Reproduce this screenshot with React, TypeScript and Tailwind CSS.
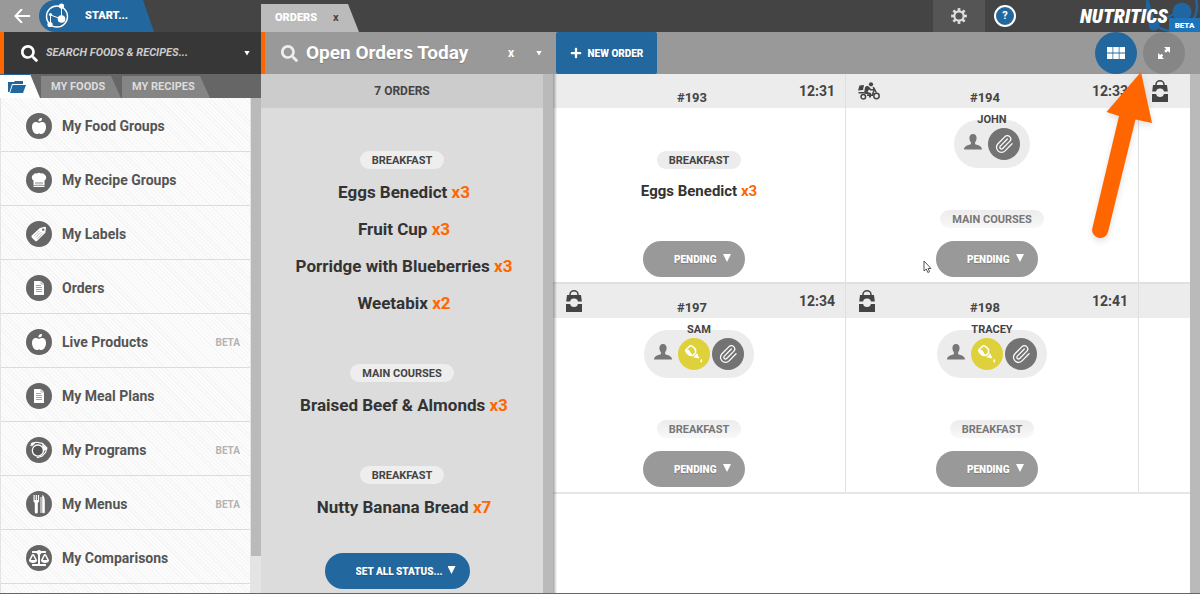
import React from 'react';
import { Paperclip } from 'lucide-react';
import { FaAppleAlt, FaBalanceScale, FaPlus, FaSearch } from 'react-icons/fa';

type IconProps = { className?: string };

interface Dish {
  name: string;
  qty: number;
}

interface Order {
  id: string;
  time: string;
  delivery?: 'bag' | 'bike';
  customer?: string;
  allergy?: boolean;
  course: string;
  dish?: Dish;
}

const ChefHatIcon: React.FC<IconProps> = ({ className }) => (
  <svg viewBox="0 0 16 16" className={className} fill="currentColor">
    <path d="M2.500 8.500A3.400 3.400 0 0 1 2.600 2.500 3.200 3.200 0 0 1 6 1.400a3.600 3.600 0 0 1 4 0A3.200 3.200 0 0 1 13.400 2.500 3.400 3.400 0 0 1 13.500 8.500V13h-11z" />
    <path d="M2.500 13.600h11V15h-11z" />
    <path d="M5 12.500V10M7 12.500V10M9 12.500V10M11 12.500V10" stroke="#666" strokeWidth=".8" />
  </svg>
);

const TagIcon: React.FC<IconProps> = ({ className }) => (
  <svg viewBox="0 0 20 20" className={className}>
    <path d="M11 3.200 16.500 2q1.300 0 1.300 1.300L17 8.500 7.800 17.700q-1 .8-2 0L2 13.800q-.8-1 0-2z" fill="currentColor" />
    <circle cx="14.700" cy="5.200" r="1.300" fill="#666" />
    <path d="m4.500 12.500 6-6M6.300 14l6-6M8 15.500l6-6" stroke="#999" strokeWidth=".8" />
  </svg>
);

const DocIcon: React.FC<IconProps> = ({ className }) => (
  <svg viewBox="0 0 16 16" className={className}>
    <path d="M3 1h7l3 3v11H3z" fill="currentColor" />
    <path d="M5 5.500h5M5 7.500h6M5 9.500h6M5 11.500h6" stroke="#999" strokeWidth=".9" />
    <path d="M10 1v3h3" fill="none" stroke="#999" strokeWidth=".7" />
  </svg>
);

const ProgramIcon: React.FC<IconProps> = ({ className }) => (
  <svg viewBox="0 0 18 18" className={className} fill="none" stroke="currentColor">
    <circle cx="8" cy="9.500" r="5" fill="#555" strokeWidth="1.200" />
    <path d="M1.500 5.500 3 3l4-1 5 1 4 4-1 4-3 3.500-5 1.500" strokeWidth="1" />
    <path d="m12 4 4.500 4-3.500 2z" fill="currentColor" strokeWidth=".5" />
    <path d="m2 3 4-1-3 3.500z" fill="currentColor" strokeWidth=".5" />
  </svg>
);

const CutleryIcon: React.FC<IconProps> = ({ className }) => (
  <svg viewBox="0 0 18 20" className={className} fill="currentColor">
    <path d="M3.500 1h1.200v5h1V1h1.200v5h1V1h1.200v6.500L7.800 9v9a1.500 1.500 0 0 1-3 0V9L3.500 7.500z" />
    <path d="M10.500 3h1v16h-1z" />
    <path d="M12.200 1c1.800.8 2.600 3 2.600 6v11a1.300 1.300 0 0 1-2.600 0z" />
  </svg>
);

const BagIcon: React.FC<IconProps> = ({ className }) => (
  <svg viewBox="0 0 18 22" className={className}>
    <path d="M5 6V4.500a4 3.700 0 0 1 8 0V6" fill="none" stroke="#444" strokeWidth="1.500" />
    <path d="M2 5h14l.8 6.500H1.200z" fill="#444" />
    <path d="M1 14h16v8H1z" fill="#444" />
    <ellipse cx="9" cy="12.800" rx="4" ry="4.200" fill="#ececec" />
  </svg>
);

const BikeIcon: React.FC<IconProps> = ({ className }) => (
  <svg viewBox="0 0 22 18" className={className} fill="#444">
    <circle cx="13" cy="2.300" r="2.100" />
    <path d="M1.500 3.500 6 3 5 8 0 8.500z" />
    <path d="M.5 10h6v1.500h-6z" />
    <path d="M7 5.500c1-1.500 3-1.800 4-.8l2 2.300h3v1.500h-3.600l-1.400-1L9.500 10l3.500 1v4.500h-2V12.500l-5-1z" />
    <path d="m14.500 4.500 2 1 2.500 5-1 .5-1.500-2-1.500 5H9v-1.500h4.500l2-4.500z" />
    <circle cx="5.300" cy="14.700" r="2.300" fill="none" stroke="#444" strokeWidth="1.500" />
    <circle cx="18.500" cy="14" r="2.700" fill="none" stroke="#444" strokeWidth="1.500" />
  </svg>
);

const PersonIcon: React.FC<IconProps> = ({ className }) => (
  <svg viewBox="0 0 18 16" className={className} fill="#777">
    <path d="M9 0c2.500 0 3.600 1.700 3.600 4 0 1.800-.8 3.300-1.500 4.200v2c2.400 1 6.900 1.500 6.900 5.300H0c0-3.800 4.500-4.300 6.900-5.300v-2C6.200 7.300 5.400 5.800 5.400 4 5.400 1.700 6.500 0 9 0z" />
  </svg>
);

const BottleIcon: React.FC<IconProps> = ({ className }) => (
  <svg viewBox="0 0 20 20" className={className} fill="none" stroke="#fff">
    <path d="M1.800 6 6.500 1.500c.8-.3 4 2.500 5 4v3.300L8.800 11.500l-3.300-.3C4 10 1.500 7.200 1.800 6z" strokeWidth="1.600" />
    <path d="M1.600 6c.6 2 2.500 4.200 4 5.500l3.200.2L5 6z" fill="#fff" stroke="none" />
    <path d="m9.300 13.200 3.900-4 2.300 5.300z" fill="#fff" stroke="none" />
    <path d="M17.300 14.800c1.300 1.700 1.300 3.600 0 3.600s-1.300-1.900 0-3.600z" fill="#fff" stroke="none" />
  </svg>
);

const GearIcon: React.FC<IconProps> = ({ className }) => (
  <svg viewBox="0 0 20 20" className={className} fill="none" stroke="#ddd">
    <circle cx="10" cy="10" r="5.200" strokeWidth="2.400" />
    {[0, 45, 90, 135, 180, 225, 270, 315].map((deg) => (
      <path key={deg} d="M10 1.200V4.500" strokeWidth="3" transform={`rotate(${deg} 10 10)`} />
    ))}
  </svg>
);

const menuItems = [
  { label: 'My Food Groups', icon: <FaAppleAlt className="h-4 w-4" /> },
  { label: 'My Recipe Groups', icon: <ChefHatIcon className="h-4 w-4" /> },
  { label: 'My Labels', icon: <TagIcon className="h-[18px] w-[18px]" /> },
  { label: 'Orders', icon: <DocIcon className="h-4 w-4" /> },
  { label: 'Live Products', icon: <FaAppleAlt className="h-4 w-4" />, beta: true },
  { label: 'My Meal Plans', icon: <DocIcon className="h-4 w-4" /> },
  { label: 'My Programs', icon: <ProgramIcon className="h-5 w-5" />, beta: true },
  { label: 'My Menus', icon: <CutleryIcon className="h-5 w-5" />, beta: true },
  { label: 'My Comparisons', icon: <FaBalanceScale className="h-4 w-5" /> },
];

const summary: { course: string; dishes: Dish[] }[] = [
  {
    course: 'BREAKFAST',
    dishes: [
      { name: 'Eggs Benedict', qty: 3 },
      { name: 'Fruit Cup', qty: 3 },
      { name: 'Porridge with Blueberries', qty: 3 },
      { name: 'Weetabix', qty: 2 },
    ],
  },
  { course: 'MAIN COURSES', dishes: [{ name: 'Braised Beef & Almonds', qty: 3 }] },
  { course: 'BREAKFAST', dishes: [{ name: 'Nutty Banana Bread', qty: 7 }] },
];

const orderRows: Order[][] = [
  [
    { id: '#193', time: '12:31', course: 'BREAKFAST', dish: { name: 'Eggs Benedict', qty: 3 } },
    { id: '#194', time: '12:33', delivery: 'bike', customer: 'JOHN', course: 'MAIN COURSES' },
  ],
  [
    { id: '#197', time: '12:34', delivery: 'bag', customer: 'SAM', allergy: true, course: 'BREAKFAST' },
    { id: '#198', time: '12:41', delivery: 'bag', customer: 'TRACEY', allergy: true, course: 'BREAKFAST' },
  ],
];

const StatusSelect: React.FC<{ label: string; value: string; wide?: boolean }> = ({ label, value, wide }) => (
  <div className={`relative mr-[10px] h-9 shrink-0 rounded-full text-white ${wide ? 'w-[145px] bg-[#22689f]' : 'w-[102px] bg-[#999]'}`}>
    <select
      aria-label={label}
      className="h-full w-full appearance-none rounded-full pl-[31px] text-[10px] font-black text-shadow-xs"
    >
      <option>{value}</option>
    </select>
    <span className="pointer-events-none absolute top-[13px] right-[14px] h-2 w-2 bg-white [clip-path:polygon(0_0,100%_0,50%_100%)]" />
  </div>
);

const OrderHeader: React.FC<{ order?: Order; icon?: React.ReactNode }> = ({ order, icon }) => (
  <div className="grid h-[34px] shrink-0 grid-cols-[60px_1fr_76px] bg-[#ececec] pr-[10px] pl-3">
    <div className="pt-[6px]">{icon}</div>
    <h3 className="pt-4 text-center text-[13px] leading-4">{order?.id}</h3>
    <time className="pt-2 text-right text-sm leading-[18px]">{order?.time}</time>
  </div>
);

const OrderCard: React.FC<{ order: Order }> = ({ order }) => (
  <article className="flex w-[293px] shrink-0 flex-col border-r border-[#e0e0e0]">
    <OrderHeader
      order={order}
      icon={
        order.delivery === 'bag' ? (
          <BagIcon className="h-[22px] w-[18px]" />
        ) : order.delivery === 'bike' ? (
          <BikeIcon className="mt-[2px] h-[18px] w-[22px]" />
        ) : null
      }
    />
    <div className={`flex h-[174px] flex-col items-center pb-[5px] ${order.customer ? 'pt-3' : 'pt-[43px]'}`}>
      {order.customer && (
        <div className="relative mb-[42px] flex h-12 shrink-0 items-center gap-[2px] rounded-full bg-[#ececec] px-[10px]">
          <span className="absolute inset-x-0 -top-2 text-center text-[11px] leading-4">{order.customer}</span>
          <PersonIcon className="mr-1 mb-1 h-4 w-[18px]" />
          {order.allergy && (
            <button aria-label="Allergies" className="flex h-8 w-8 items-center justify-center rounded-full bg-[#dfd13b]">
              <BottleIcon className="h-5 w-5" />
            </button>
          )}
          <button aria-label="Notes" className="flex h-8 w-8 items-center justify-center rounded-full bg-[#737373] text-white">
            <Paperclip className="h-5 w-5" strokeWidth={1.5} />
          </button>
        </div>
      )}
      <span
        className={`h-[18px] rounded-full px-3 text-[11px] leading-[19px] ${
          order.customer ? 'bg-linear-to-b from-[#ececec] to-[#f8f8f8] text-[#777]' : 'bg-[#ececec] text-[#444]'
        }`}
      >
        {order.course}
      </span>
      {order.dish && (
        <p className="pt-3 text-[15px] leading-5 text-[#333]">
          {order.dish.name} <span className="text-[#ff6600]">x{order.dish.qty}</span>
        </p>
      )}
      <div className="mt-auto">
        <StatusSelect label={`Status of order ${order.id}`} value="PENDING" />
      </div>
    </div>
  </article>
);

const Sidebar: React.FC = () => (
  <aside className="flex w-[261px] shrink-0 flex-col">
    <div className="flex h-8 shrink-0 bg-[#444]">
      <button aria-label="Back" className="flex w-[60px] shrink-0 items-center bg-[#999] pl-[14px]">
        <svg viewBox="0 0 16 14" className="h-[14px] w-4 shrink-0" fill="none" stroke="#fff" strokeWidth="2">
          <path d="M8 0 1.500 7 8 14M1.500 7H16" />
        </svg>
      </button>
      <button className="-ml-[21px] flex w-[115px] items-center gap-4 rounded-l-full bg-[#22689f] pl-[6px] text-[11px] font-black text-white text-shadow-sm [clip-path:polygon(0_0,104px_0,100%_100%,0_100%)]">
        <svg viewBox="0 0 24 26" className="h-[26px] w-6" fill="none" stroke="#fff">
          <circle cx="12" cy="13.500" r="10.500" strokeWidth="1.400" />
          <path d="M16.500 4v12L5.500 12v9" strokeWidth="1" />
          <circle cx="16.500" cy="3" r="2.600" fill="#fff" stroke="none" />
          <circle cx="16.500" cy="16" r="3.800" fill="#fff" stroke="none" />
          <circle cx="5.500" cy="11.500" r="1.600" fill="#fff" stroke="none" />
          <circle cx="5" cy="21.500" r="2.600" fill="#fff" stroke="none" />
        </svg>
        START...
      </button>
    </div>

    <label className="flex h-[42px] shrink-0 items-center border-l-4 border-[#ff6600] bg-[#373737] pl-[17px] text-white">
      <FaSearch className="h-[17px] w-[17px] shrink-0" />
      <input
        aria-label="Search foods and recipes"
        placeholder="SEARCH FOODS & RECIPES..."
        className="ml-2 min-w-0 flex-1 text-[11px] font-bold italic outline-none placeholder:text-[#ccc]"
      />
      <span className="mr-[11px] h-[5px] w-[6px] bg-white [clip-path:polygon(0_0,100%_0,50%_100%)]" />
    </label>

    <nav className="flex h-6 shrink-0 items-end gap-px bg-[#666] text-[11px] text-[#ddd]">
      <button
        aria-label="Folders"
        className="flex h-6 w-10 items-center border-t border-[#22689f] bg-white pl-2 [clip-path:polygon(0_0,30px_0,100%_100%,0_100%)]"
      >
        <svg viewBox="0 0 18 12" className="h-3 w-[18px]" fill="#22689f">
          <path d="M0 1h6l1-1h8v3H4L1.500 11H0z" />
          <path d="M4.700 4H18l-3 8H2z" />
        </svg>
      </button>
      <button className="h-[22px] w-20 bg-[#858585] pl-[10px] text-left [clip-path:polygon(0_0,70px_0,100%_100%,0_100%)]">MY FOODS</button>
      <button className="h-[22px] w-[88px] bg-[#858585] pl-[10px] text-left [clip-path:polygon(0_0,78px_0,100%_100%,0_100%)]">MY RECIPES</button>
    </nav>

    <div className="flex min-h-0 flex-1">
      <ul className="min-w-0 flex-1 overflow-hidden border-x border-[#e4e4e4] bg-[repeating-linear-gradient(45deg,#fcfcfc_0,#fcfcfc_2px,#f5f5f5_2px,#f5f5f5_3px)]">
        {menuItems.map((item) => (
          <li key={item.label} className="h-[54px] border-b border-[#dcdcdc]">
            <a href="#" className="flex h-full items-center pt-[2px] pr-[10px] pl-[25px] text-sm text-[#555]">
              <span className="mr-[10px] flex h-[26px] w-[26px] shrink-0 items-center justify-center rounded-full bg-[#666] text-white">
                {item.icon}
              </span>
              {item.label}
              {item.beta && <span className="ml-auto pt-1 text-[10px] text-[#b3b3b3]">BETA</span>}
            </a>
          </li>
        ))}
      </ul>
      <div className="w-[10px] shrink-0 bg-[#e4e4e4] pb-[37px]">
        <div className="h-full bg-[#bababa]" />
      </div>
    </div>
  </aside>
);

const TopBar: React.FC = () => (
  <div className="relative flex h-8 shrink-0 items-end bg-[#444]">
    <div className="flex h-7 w-[98px] items-center bg-[#bbb] pl-[14px] [clip-path:polygon(0_0,87px_0,100%_100%,0_100%)]">
      <a href="#" className="text-[11px] font-black text-white">ORDERS</a>
      <button aria-label="Close tab" className="ml-4 text-[11px] leading-4 text-[#444]">x</button>
    </div>
    <div className="ml-auto flex h-8 items-center">
      <button aria-label="Settings" className="flex h-full w-[52px] items-center justify-center bg-[#555]">
        <GearIcon className="h-[18px] w-[18px]" />
      </button>
      <button className="ml-[9px] flex h-[22px] w-[22px] items-center justify-center rounded-full border-2 border-white bg-[#22689f] text-[11px] text-white">?</button>
      <div className="relative ml-[62px] h-8 w-[122px] overflow-hidden">
        <svg viewBox="0 0 60 32" className="absolute top-0 right-0 h-8 w-[60px]" fill="none" stroke="#1f66a3">
          <circle cx="32" cy="6" r="25" strokeWidth="2.500" />
          <path d="M8 2l6 22M14 24l28-14" strokeWidth="2.500" />
          <circle cx="42" cy="12" r="9.500" fill="#1f66a3" stroke="none" />
          <circle cx="14" cy="25" r="5.500" fill="#1f66a3" stroke="none" />
        </svg>
        <span className="absolute top-0 left-[2px] font-['Roboto_Condensed','Liberation_Sans_Narrow',Roboto,sans-serif] text-[20px] leading-8 font-black text-white italic">NUTRITICS</span>
        <span className="absolute right-0 bottom-0 h-[14px] w-[31px] bg-[#1c75bc] text-center text-[8px] leading-[15px] font-black text-white">BETA</span>
      </div>
    </div>
  </div>
);

const Toolbar: React.FC = () => (
  <div className="flex h-[42px] shrink-0 items-center bg-[#999] text-white">
    <label className="flex h-full w-[295px] shrink-0 items-center border-l-4 border-[#ff6600] pl-4">
      <FaSearch className="h-[17px] w-[17px] shrink-0 text-[#eee]" />
      <input
        aria-label="Filter"
        defaultValue="Open Orders Today"
        className="ml-2 min-w-0 flex-1 text-[19px] font-bold outline-none text-shadow-xs"
      />
      <button aria-label="Clear filter" className="mr-[22px] text-[12px] leading-4">x</button>
      <span className="mr-[14px] h-[5px] w-[6px] bg-white [clip-path:polygon(0_0,100%_0,50%_100%)]" />
    </label>
    <button className="flex h-full w-[101px] items-center justify-center gap-[6px] rounded-xs bg-[#22689f] text-[10px] font-black text-shadow-xs">
      <FaPlus className="h-3 w-3" />
      NEW ORDER
    </button>
    <button aria-label="Grid view" className="ml-auto flex h-[42px] w-[42px] items-center justify-center rounded-full bg-[#22689f]">
      <svg viewBox="0 0 18 12" className="h-3 w-[18px]" fill="#fff">
        <path d="M0 0h5.500v5.500H0zM6.250 0h5.500v5.500h-5.500zM12.500 0H18v5.500h-5.500zM0 6.500h5.500V12H0zM6.250 6.500h5.500V12h-5.500zM12.500 6.500H18V12h-5.500z" />
      </svg>
    </button>
    <button aria-label="Full screen" className="mr-[15px] ml-[6px] flex h-[42px] w-[42px] items-center justify-center rounded-full bg-[#868686]">
      <svg viewBox="0 0 12 12" className="h-3 w-3" fill="#fff">
        <path d="M6 0h6v6L9.900 3.900 8 5.800 6.200 4l1.900-1.900zM0 6l2.100 2.100L3.500 6.700l1.800 1.800-1.400 1.400L6 12H0z" />
      </svg>
    </button>
  </div>
);

const OrderSummary: React.FC = () => (
  <section className="flex w-[292px] shrink-0 bg-[#dcdcdc]">
    <div className="flex flex-1 flex-col items-center">
      <h2 className="h-[34px] w-full shrink-0 bg-[#ccc] text-center text-[12px] leading-[35px] text-[#444]">7 ORDERS</h2>
      <div className="flex flex-col gap-[42px] pt-[43px]">
        {summary.map((group, i) => (
          <div key={i} className="flex flex-col items-center">
            <h4 className="mb-[5px] h-[18px] rounded-full bg-[#eee] px-3 text-[11px] leading-[19px] text-[#444]">{group.course}</h4>
            {group.dishes.map((dish) => (
              <p key={dish.name} className="pl-1 text-[17px] leading-[37px] text-[#333]">
                {dish.name} <span className="text-[#ff6600]">x{dish.qty}</span>
              </p>
            ))}
          </div>
        ))}
      </div>
      <div className="pt-[27px]">
        <StatusSelect label="Set status of all orders" value="SET ALL STATUS..." wide />
      </div>
    </div>
    <div className="w-[10px] bg-[#bababa]" />
  </section>
);

export default function App() {
  return (
    <div className="relative flex h-screen overflow-hidden border-b border-[#666] bg-white font-[Roboto,sans-serif] font-bold text-[#444]">
      <Sidebar />
      <main className="flex min-w-0 flex-1 flex-col">
        <TopBar />
        <Toolbar />
        <div className="flex min-h-0 flex-1">
          <OrderSummary />
          <section className="relative min-w-0 flex-1 overflow-hidden">
            {orderRows.map((row, i) => (
              <div key={i} className={i === 0 ? 'flex' : 'flex border-y-2 border-[#e0e0e0] border-b-[#e6e6e6]'}>
                {row.map((order) => (
                  <OrderCard key={order.id} order={order} />
                ))}
                <div className="min-w-0 flex-1 overflow-hidden">
                  <OrderHeader icon={i === 0 ? <BagIcon className="h-[22px] w-[18px]" /> : null} />
                </div>
              </div>
            ))}
            <div className="pointer-events-none absolute inset-y-0 left-0 w-1 bg-linear-to-r from-black/35 to-transparent" />
          </section>
          <div className="w-[10px] shrink-0 bg-[#bababa]" />
        </div>
      </main>

      {/* pointer arrow towards the full screen button */}
      <svg viewBox="0 0 72 180" className="pointer-events-none absolute top-[68px] right-[40px] h-[180px] w-[72px] drop-shadow-md" fill="#ff6600">
        <path d="M53 4 64 55 47.500 51.500 20 164a8 8 0 0 1-15.600-4L31 48 18.500 44z" />
      </svg>
      <svg viewBox="0 0 10 14" className="pointer-events-none absolute top-[260px] left-[923px] h-[14px] w-[10px]" fill="#fff" stroke="#555" strokeWidth="1">
        <path d="M1 1v10l2.300-2 1.500 3.500 1.800-.8-1.500-3.200H8z" />
      </svg>
    </div>
  );
}
